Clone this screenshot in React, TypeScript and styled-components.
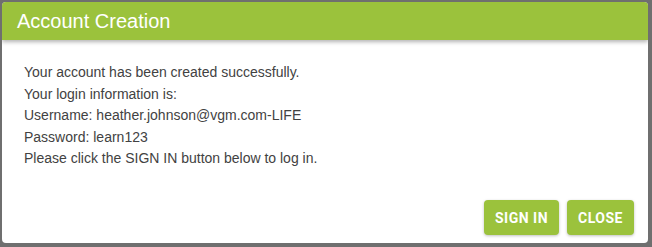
import React from "react";
import styled, { createGlobalStyle } from "styled-components";

const GlobalStyle = createGlobalStyle`
  html, body {
    margin: 0;
    padding: 0;
    background: #6f6f6f;
  }
`;

const Overlay = styled.div`
  display: flex;
  padding: 2px 4px 4px 2px;
  height: 247px;
  box-sizing: border-box;
`;

const Dialog = styled.div`
  flex: 1;
  display: flex;
  flex-direction: column;
  background: #fff;
  border-radius: 4px;
  overflow: hidden;
`;

const Header = styled.div`
  height: 38px;
  display: flex;
  align-items: center;
  padding: 0 15px;
  background: #9bc23c;
  color: #fff;
  font-family: "Liberation Sans", Arial, sans-serif;
  font-size: 20px;
  box-shadow: 0 2px 4px rgba(0, 0, 0, 0.3);
  position: relative;
`;

const Body = styled.div`
  flex: 1;
  padding: 22px 22px 0;
  font-family: "Liberation Sans", Arial, sans-serif;
  font-size: 14px;
  line-height: 21.5px;
  color: #424242;
`;

const Actions = styled.div`
  display: flex;
  justify-content: flex-end;
  gap: 8px;
  padding: 0 14px 8px;
`;

const Button = styled.button`
  height: 35px;
  padding: 0 11px;
  border: none;
  border-radius: 4px;
  background: #9bc23c;
  color: #fff;
  font-family: Roboto, "Liberation Sans", sans-serif;
  font-weight: 700;
  font-size: 14px;
  letter-spacing: 0.5px;
  box-shadow: 0 1px 3px rgba(0, 0, 0, 0.25);
  cursor: pointer;
`;

const lines = [
  "Your account has been created successfully.",
  "Your login information is:",
  "Username: heather.johnson@vgm.com-LIFE",
  "Password: learn123",
  "Please click the SIGN IN button below to log in.",
];

export default function App() {
  return (
    <>
      <GlobalStyle />
      <Overlay>
        <Dialog>
          <Header>Account Creation</Header>
          <Body>
            {lines.map((l) => (
              <div key={l}>{l}</div>
            ))}
          </Body>
          <Actions>
            <Button>SIGN IN</Button>
            <Button>CLOSE</Button>
          </Actions>
        </Dialog>
      </Overlay>
    </>
  );
}
